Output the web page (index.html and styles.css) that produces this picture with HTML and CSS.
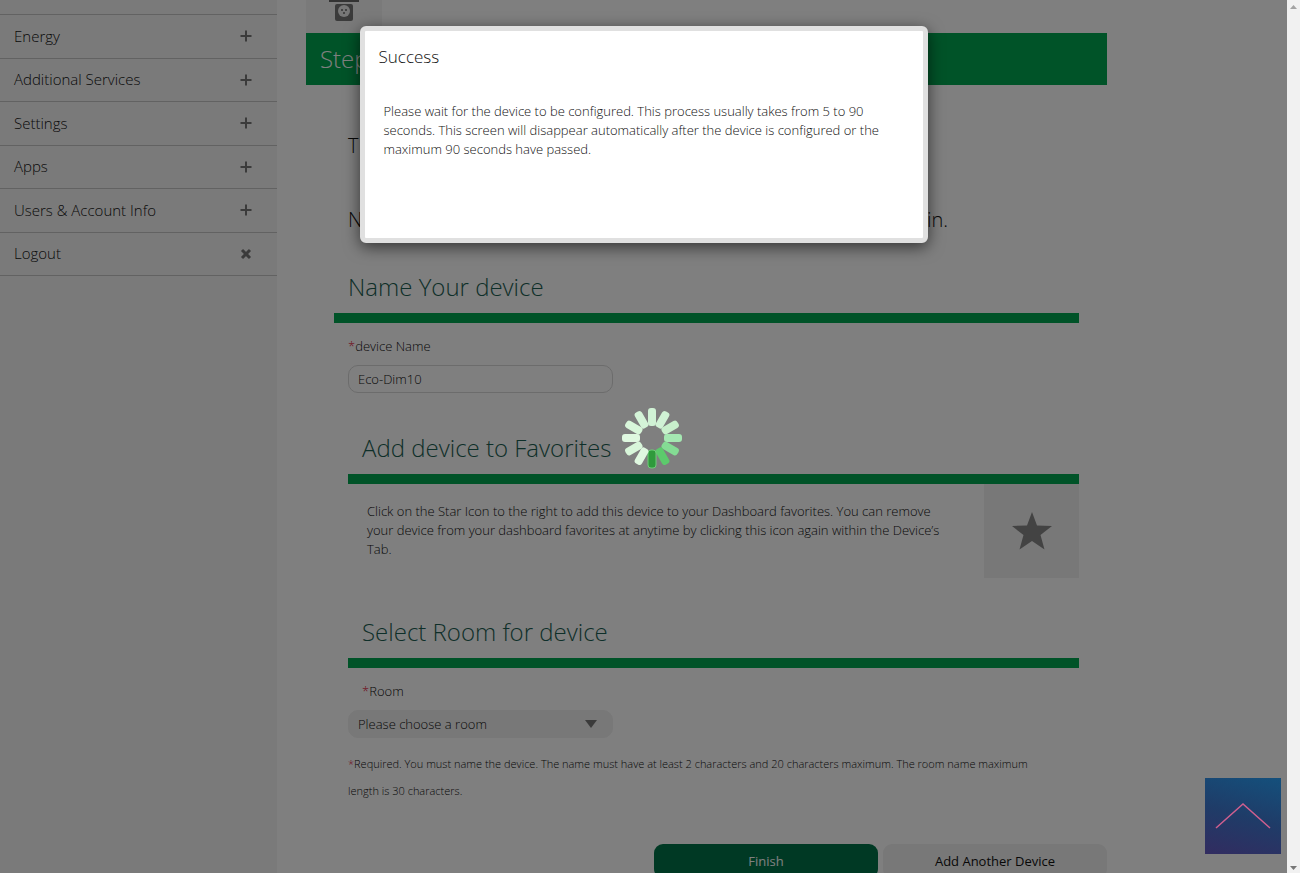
FILE: index.html
```html
<!DOCTYPE html>
<html lang="en">
<head>
    <meta charset="UTF-8">
    <meta name="viewport" content="width=device-width, initial-scale=1.0">
    <title>Add Device</title>
    <link rel="stylesheet" href="styles.css">
</head>
<body>
    <div class="page">
        <!-- Side menu -->
        <nav class="sidebar">
            <ul class="menu">
                <li><a href="#energy">Energy</a><svg class="sign" viewBox="0 0 12 12"><path d="M6 0.5v11M0.5 6h11"/></svg></li>
                <li><a href="#services">Additional Services</a><svg class="sign" viewBox="0 0 12 12"><path d="M6 0.5v11M0.5 6h11"/></svg></li>
                <li><a href="#settings">Settings</a><svg class="sign" viewBox="0 0 12 12"><path d="M6 0.5v11M0.5 6h11"/></svg></li>
                <li><a href="#apps">Apps</a><svg class="sign" viewBox="0 0 12 12"><path d="M6 0.5v11M0.5 6h11"/></svg></li>
                <li><a href="#users">Users &amp; Account Info</a><svg class="sign" viewBox="0 0 12 12"><path d="M6 0.5v11M0.5 6h11"/></svg></li>
                <li><a href="#logout">Logout</a><svg class="sign cross" viewBox="0 0 12 12"><path d="M2 2l8 8M10 2l-8 8"/></svg></li>
            </ul>
        </nav>

        <!-- Device wizard -->
        <main class="content">
            <div class="device-tile">
                <svg width="32" height="22" viewBox="0 0 32 22">
                    <rect x="1" y="0" width="30" height="2" fill="#666"/>
                    <rect x="7" y="4" width="18" height="17" rx="2" fill="#777"/>
                    <circle cx="16" cy="11" r="6" fill="#eee"/>
                    <circle cx="14" cy="10" r="1" fill="#666"/>
                    <circle cx="18" cy="10" r="1" fill="#666"/>
                    <circle cx="16" cy="13" r="1" fill="#666"/>
                </svg>
            </div>
            <h1 class="step">Step</h1>

            <form class="form">
                <p class="intro">T</p>
                <p class="intro"><span>N</span><span>in.</span></p>

                <section>
                    <h2>Name Your device</h2>
                    <div class="field">
                        <label for="name"><i>*</i>device Name</label>
                        <input type="text" id="name" value="Eco-Dim10">
                    </div>
                </section>

                <section class="inner">
                    <h2>Add device to Favorites</h2>
                    <div class="favorite">
                        <p>Click on the Star Icon to the right to add this device to your Dashboard favorites. You can remove your device from your dashboard favorites at anytime by clicking this icon again within the Device’s Tab.</p>
                        <button type="button" class="star" aria-label="Favorite">
                            <svg width="40" height="38" viewBox="0 0 40 38"><path d="M20 0l5 13.500 15 0.500-11.500 9 4 14.500-12.500-8.500-12.500 8.500 4-14.500L0 14l15-0.500z" fill="#868686"/></svg>
                        </button>
                    </div>
                </section>

                <section class="inner room">
                    <h2>Select Room for device</h2>
                    <label for="room"><i>*</i>Room</label>
                    <div class="select">
                        <select id="room">
                            <option>Please choose a room</option>
                        </select>
                        <svg class="caret" viewBox="0 0 12 8"><path d="M0 0h12l-6 8z"/></svg>
                    </div>
                    <p class="note"><i>*</i>Required. You must name the device. The name must have at least 2 characters and 20 characters maximum. The room name maximum length is 30 characters.</p>
                </section>
            </form>

            <div class="actions">
                <button type="button" class="btn primary">Finish</button>
                <button type="button" class="btn">Add Another Device</button>
            </div>
        </main>

        <div class="overlay"></div>

        <div class="dialog" role="dialog" aria-labelledby="dialog-title">
            <h3 id="dialog-title">Success</h3>
            <p>Please wait for the device to be configured. This process usually takes from 5 to 90 seconds. This screen will disappear automatically after the device is configured or the maximum 90 seconds have passed.</p>
        </div>

        <svg class="spinner" viewBox="-31 -31 62 62">
            <rect x="-4" y="-30" width="8" height="18" rx="3" fill="#d0f2d5"/>
            <rect x="-4" y="-30" width="8" height="18" rx="3" fill="#d0f2d5" transform="rotate(30)"/>
            <rect x="-4" y="-30" width="8" height="18" rx="3" fill="#c8f0cc" transform="rotate(60)"/>
            <rect x="-4" y="-30" width="8" height="18" rx="3" fill="#a5e8b2" transform="rotate(90)"/>
            <rect x="-4" y="-30" width="8" height="18" rx="3" fill="#84dc94" transform="rotate(120)"/>
            <rect x="-4" y="-30" width="8" height="18" rx="3" fill="#5cca6c" transform="rotate(150)"/>
            <rect x="-4" y="-30" width="8" height="18" rx="3" fill="#2f9a3c" stroke="#6fce78" transform="rotate(180)"/>
            <rect x="-4" y="-30" width="8" height="18" rx="3" fill="#dff8e0" transform="rotate(210)"/>
            <rect x="-4" y="-30" width="8" height="18" rx="3" fill="#d8f6da" transform="rotate(240)"/>
            <rect x="-4" y="-30" width="8" height="18" rx="3" fill="#dff8e0" transform="rotate(270)"/>
            <rect x="-4" y="-30" width="8" height="18" rx="3" fill="#d8f6da" transform="rotate(300)"/>
            <rect x="-4" y="-30" width="8" height="18" rx="3" fill="#d4f4d8" transform="rotate(330)"/>
        </svg>

        <button type="button" class="to-top" aria-label="Back to top">
            <svg width="56" height="26" viewBox="0 0 56 26"><path d="M1 25L28 1l27 24" fill="none" stroke="#cf5f8f" stroke-width="1.500"/></svg>
        </button>
    </div>

    <div class="scrollbar">
        <svg width="7" height="4" viewBox="0 0 7 4"><path d="M0 4h7L3.500 0z" fill="#a3a3a3"/></svg>
        <svg width="7" height="4" viewBox="0 0 7 4"><path d="M0 0h7L3.500 4z" fill="#777"/></svg>
    </div>
</body>
</html>
```

FILE: styles.css
```css
* {
    margin: 0;
    padding: 0;
    box-sizing: border-box;
}

body {
    display: flex;
    height: 100vh;
    overflow: hidden;
    background: #fff;
    color: #111;
    font-family: "Open Sans", "Noto Sans", sans-serif;
    font-size: 13px;
    font-weight: 300;
    line-height: 19px;
}

i {
    color: #e02040;
    font-style: normal;
}

button,
input,
select {
    font: inherit;
    color: inherit;
    border: none;
}

.page {
    position: relative;
    flex: 1;
    display: flex;
    overflow: hidden;
}

/* Side menu */
.sidebar {
    width: 277px;
    flex-shrink: 0;
    padding-top: 14px;
    background: #f5f5f5;
}

.menu {
    display: grid;
    grid-auto-rows: 1fr;
    height: 262px;
    list-style: none;
    border-top: 1px solid #c4c4c4;
}

.menu li {
    display: flex;
    align-items: center;
    justify-content: space-between;
    padding: 0 25px 0 14px;
    border-bottom: 1px solid #c4c4c4;
}

.menu a {
    color: inherit;
    font-size: 15px;
    text-decoration: none;
}

.sign {
    width: 12px;
    height: 12px;
    fill: none;
    stroke: #777;
    stroke-width: 2;
}

.cross {
    stroke-width: 3;
}

/* Device wizard */
.content {
    width: 801px;
    margin-left: 29px;
}

.device-tile {
    width: 76px;
    height: 33px;
    text-align: center;
    background: #f5f5f5;
}

.step {
    padding: 0 14px;
    background: #00a650;
    color: #fff;
    font-size: 24px;
    font-weight: 300;
    line-height: 52px;
}

.form {
    padding: 48px 28px 0;
}

.intro {
    display: flex;
    justify-content: space-between;
    width: 614px;
    padding-left: 14px;
    margin-bottom: 48px;
    font-size: 20px;
    line-height: 26px;
}

h2 {
    padding: 0 14px 8px;
    border-bottom: 10px solid #00a650;
    color: #1c5e52;
    font-size: 24px;
    font-weight: 300;
    line-height: 36px;
}

.intro + section {
    margin-top: -12px;
}

.field {
    padding: 14px 14px 0;
}

.field label,
.room label {
    display: block;
    margin-bottom: 9px;
}

.field input,
.select {
    display: block;
    width: 265px;
    height: 28px;
    padding: 0 9px;
    border: 1px solid #d8d8d8;
    border-radius: 10px;
    background: #fff;
}

.inner {
    margin: 37px 0 0 14px;
}

.favorite {
    display: flex;
    justify-content: space-between;
}

.favorite p {
    width: 604px;
    padding: 18px 0 0 19px;
}

.star {
    display: flex;
    align-items: center;
    justify-content: center;
    width: 95px;
    height: 94px;
    background: #f0f0f0;
}

.room {
    margin-top: 36px;
}

.room label {
    padding: 14px 14px 0;
}

.select {
    position: relative;
    border-color: #f0f0f0;
    background: #f0f0f0;
}

.select select {
    width: 100%;
    height: 26px;
    appearance: none;
    background: transparent;
}

.caret {
    position: absolute;
    top: 9px;
    right: 15px;
    width: 12px;
    height: 8px;
    fill: #777;
    pointer-events: none;
}

.note {
    padding: 12px 28px 0 0;
    font-size: 11px;
    line-height: 27px;
}

.actions {
    display: flex;
    justify-content: flex-end;
    gap: 5px;
    margin-top: 40px;
}

.btn {
    width: 224px;
    height: 34px;
    border-radius: 9px;
    background: #f0f0f0;
    font-weight: 400;
}

.primary {
    background: #007348;
    color: #fff;
}

/* Layers over the page */
.overlay {
    position: absolute;
    inset: 0;
    background: rgba(0, 0, 0, 0.5);
}

.dialog {
    position: absolute;
    top: 26px;
    left: 50%;
    width: 568px;
    height: 217px;
    padding: 14px;
    transform: translateX(-50%);
    border: 5px solid #e0e0e0;
    border-radius: 6px;
    background: #fff;
    box-shadow: 0 4px 16px rgba(0, 0, 0, 0.6);
}

.dialog h3 {
    margin-bottom: 33px;
    font-size: 17px;
    font-weight: 300;
    line-height: 24px;
}

.dialog p {
    padding: 0 5px;
}

.spinner {
    position: absolute;
    top: 50%;
    left: 50%;
    width: 62px;
    height: 62px;
    margin: -30px 0 0 -23px;
}

.to-top {
    position: absolute;
    right: 6px;
    bottom: 19px;
    display: flex;
    align-items: center;
    justify-content: center;
    width: 76px;
    height: 76px;
    background: linear-gradient(195deg, #14507c, #1f3c68 50%, #322c60);
}

.scrollbar {
    display: flex;
    flex-direction: column;
    align-items: center;
    justify-content: space-between;
    width: 13px;
    padding: 5px 0 3px;
    background: #f1f1f1;
}
```
